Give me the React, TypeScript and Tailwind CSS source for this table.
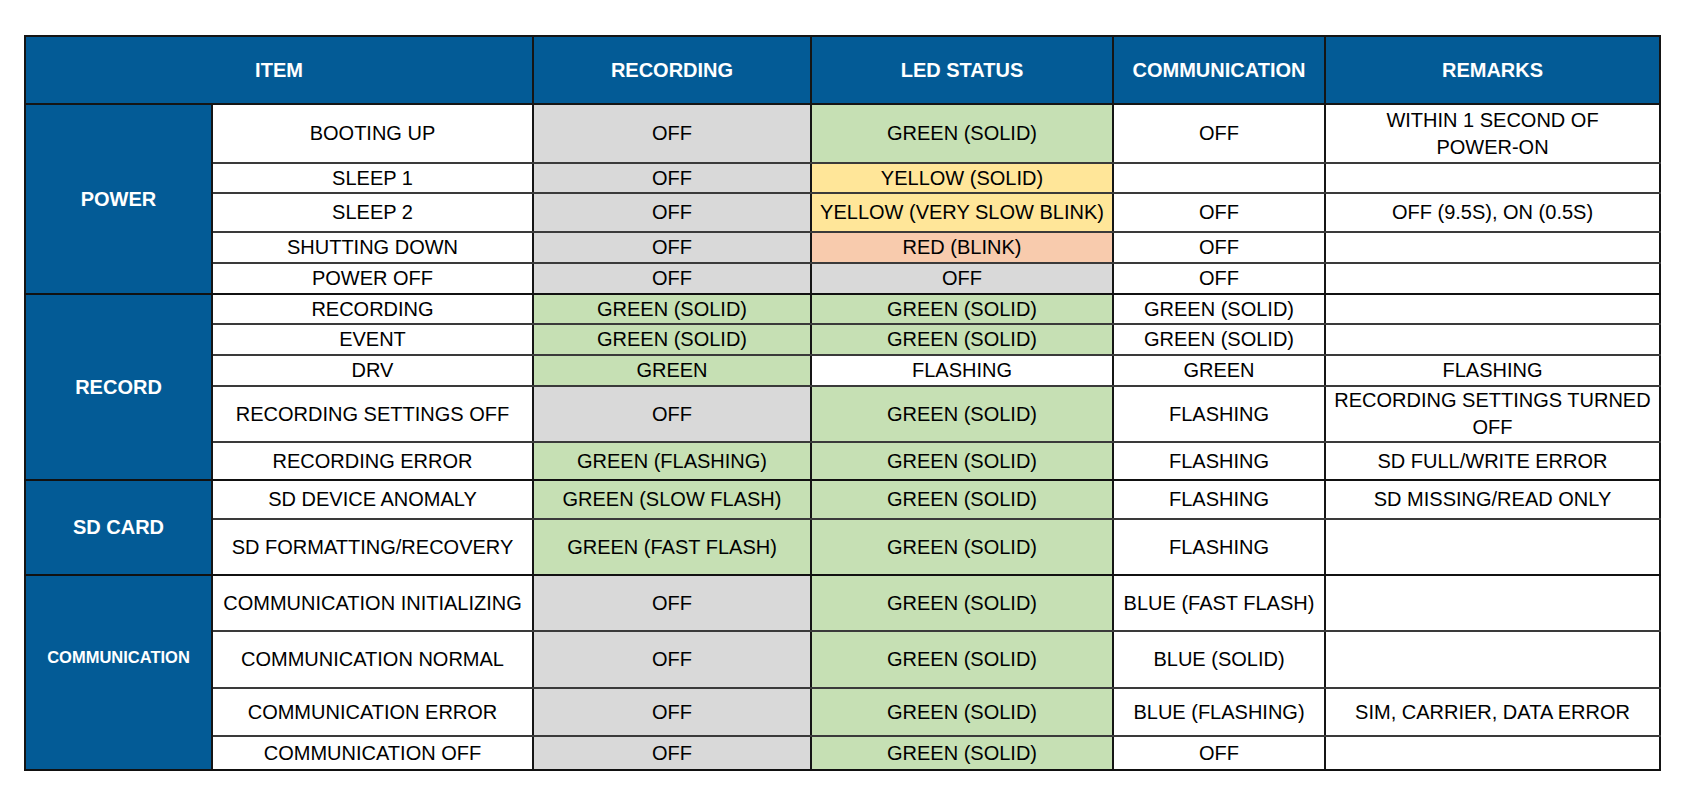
import React from "react";

const GRAY = "bg-[#d9d9d9]";
const GREEN = "bg-[#c6e0b4]";
const YELLOW = "bg-[#ffe699]";
const PEACH = "bg-[#f8cbad]";
const WHITE = "bg-white";

type Item = {
  label: string;
  rec: string;
  recBg: string;
  led: string;
  ledBg: string;
  comm: string;
  remark: string[];
  h: string;
};

type Group = { name: string; small?: boolean; items: Item[] };

const groups: Group[] = [
  {
    name: "POWER",
    items: [
      { label: "BOOTING UP", rec: "OFF", recBg: GRAY, led: "GREEN (SOLID)", ledBg: GREEN, comm: "OFF", remark: ["WITHIN 1 SECOND OF", "POWER-ON"], h: "h-[59px]" },
      { label: "SLEEP 1", rec: "OFF", recBg: GRAY, led: "YELLOW (SOLID)", ledBg: YELLOW, comm: "", remark: [], h: "h-[30px]" },
      { label: "SLEEP 2", rec: "OFF", recBg: GRAY, led: "YELLOW (VERY SLOW BLINK)", ledBg: YELLOW, comm: "OFF", remark: ["OFF (9.5S), ON (0.5S)"], h: "h-[39px]" },
      { label: "SHUTTING DOWN", rec: "OFF", recBg: GRAY, led: "RED (BLINK)", ledBg: PEACH, comm: "OFF", remark: [], h: "h-[31px]" },
      { label: "POWER OFF", rec: "OFF", recBg: GRAY, led: "OFF", ledBg: GRAY, comm: "OFF", remark: [], h: "h-[31px]" },
    ],
  },
  {
    name: "RECORD",
    items: [
      { label: "RECORDING", rec: "GREEN (SOLID)", recBg: GREEN, led: "GREEN (SOLID)", ledBg: GREEN, comm: "GREEN (SOLID)", remark: [], h: "h-[30px]" },
      { label: "EVENT", rec: "GREEN (SOLID)", recBg: GREEN, led: "GREEN (SOLID)", ledBg: GREEN, comm: "GREEN (SOLID)", remark: [], h: "h-[31px]" },
      { label: "DRV", rec: "GREEN", recBg: GREEN, led: "FLASHING", ledBg: WHITE, comm: "GREEN", remark: ["FLASHING"], h: "h-[31px]" },
      { label: "RECORDING SETTINGS OFF", rec: "OFF", recBg: GRAY, led: "GREEN (SOLID)", ledBg: GREEN, comm: "FLASHING", remark: ["RECORDING SETTINGS TURNED", "OFF"], h: "h-[56px]" },
      { label: "RECORDING ERROR", rec: "GREEN (FLASHING)", recBg: GREEN, led: "GREEN (SOLID)", ledBg: GREEN, comm: "FLASHING", remark: ["SD FULL/WRITE ERROR"], h: "h-[38px]" },
    ],
  },
  {
    name: "SD CARD",
    items: [
      { label: "SD DEVICE ANOMALY", rec: "GREEN (SLOW FLASH)", recBg: GREEN, led: "GREEN (SOLID)", ledBg: GREEN, comm: "FLASHING", remark: ["SD MISSING/READ ONLY"], h: "h-[39px]" },
      { label: "SD FORMATTING/RECOVERY", rec: "GREEN (FAST FLASH)", recBg: GREEN, led: "GREEN (SOLID)", ledBg: GREEN, comm: "FLASHING", remark: [], h: "h-[56px]" },
    ],
  },
  {
    name: "COMMUNICATION",
    small: true,
    items: [
      { label: "COMMUNICATION INITIALIZING", rec: "OFF", recBg: GRAY, led: "GREEN (SOLID)", ledBg: GREEN, comm: "BLUE (FAST FLASH)", remark: [], h: "h-[56px]" },
      { label: "COMMUNICATION NORMAL", rec: "OFF", recBg: GRAY, led: "GREEN (SOLID)", ledBg: GREEN, comm: "BLUE (SOLID)", remark: [], h: "h-[57px]" },
      { label: "COMMUNICATION ERROR", rec: "OFF", recBg: GRAY, led: "GREEN (SOLID)", ledBg: GREEN, comm: "BLUE (FLASHING)", remark: ["SIM, CARRIER, DATA ERROR"], h: "h-[48px]" },
      { label: "COMMUNICATION OFF", rec: "OFF", recBg: GRAY, led: "GREEN (SOLID)", ledBg: GREEN, comm: "OFF", remark: [], h: "h-[34px]" },
    ],
  },
];

const cell = "border-2 border-[#151515] px-1 py-0 text-center align-middle whitespace-nowrap";

export default function App() {
  return (
    <div className="min-h-screen bg-white pt-[35px] pl-[24px] font-['Liberation_Sans',Arial,sans-serif] text-[20px] leading-[27px] text-black">
      <table className="w-[1635px] table-fixed border-collapse">
        <colgroup>
          <col className="w-[187px]" />
          <col className="w-[321px]" />
          <col className="w-[278px]" />
          <col className="w-[302px]" />
          <col className="w-[212px]" />
          <col className="w-[335px]" />
        </colgroup>
        <thead>
          <tr className="h-[68px] bg-[#035b96] font-bold text-white">
            <th colSpan={2} className={cell}>ITEM</th>
            <th className={cell}>RECORDING</th>
            <th className={cell}>LED STATUS</th>
            <th className={cell}>COMMUNICATION</th>
            <th className={cell}>REMARKS</th>
          </tr>
        </thead>
        <tbody>
          {groups.map((g) =>
            g.items.map((it, i) => {
              const last = i === g.items.length - 1;
              const edge = last ? "border-b-[#111]" : "border-b-[#3a3a3a]";
              return (
                <tr key={it.label} className={it.h}>
                  {i === 0 && (
                    <td
                      rowSpan={g.items.length}
                      className={`${cell} border-b-[#111] bg-[#035b96] font-bold text-white ${
                        g.small ? "pb-[30px] text-[16.5px]" : ""
                      }`}
                    >
                      {g.name}
                    </td>
                  )}
                  <td className={`${cell} ${edge} bg-white`}>{it.label}</td>
                  <td className={`${cell} ${edge} ${it.recBg}`}>{it.rec}</td>
                  <td className={`${cell} ${edge} ${it.ledBg}`}>{it.led}</td>
                  <td className={`${cell} ${edge} bg-white`}>{it.comm}</td>
                  <td className={`${cell} ${edge} bg-white`}>
                    {it.remark.map((line, k) => (
                      <div key={k}>{line}</div>
                    ))}
                  </td>
                </tr>
              );
            })
          )}
        </tbody>
      </table>
    </div>
  );
}
